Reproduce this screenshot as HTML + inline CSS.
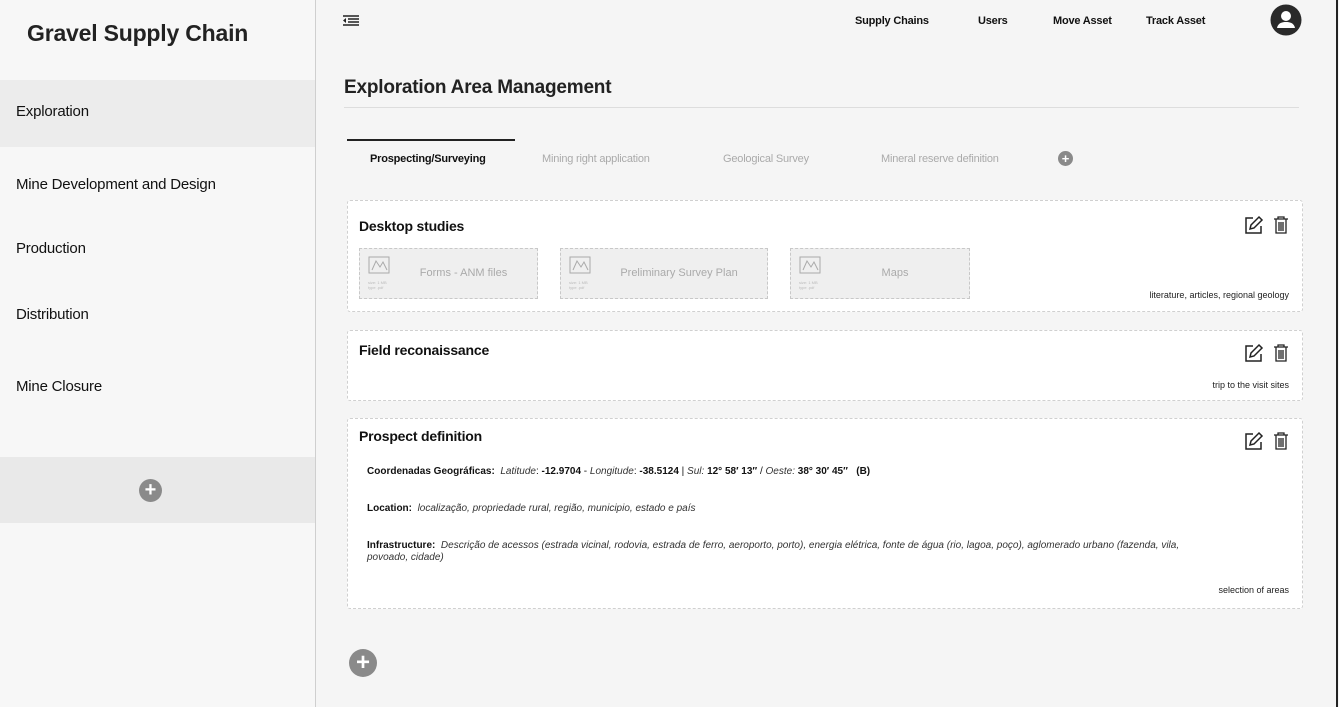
<!DOCTYPE html>
<html><head><meta charset="utf-8"><style>
*{box-sizing:border-box;margin:0;padding:0}
body{width:1339px;height:707px;overflow:hidden;background:#f5f5f5;font-family:"Liberation Sans",sans-serif;color:#111;position:relative}
.side{position:absolute;left:0;top:0;width:316px;height:707px;background:#f7f7f7;border-right:1px solid #cfcfcf}
.side h1{position:absolute;left:27px;top:20px;font-size:23px;font-weight:bold;color:#222;letter-spacing:-0.2px}
.si{position:absolute;left:0;width:315px;font-size:15px;padding-left:16px;color:#111;letter-spacing:-0.2px}
.abs{position:absolute}
.card{position:absolute;left:347px;width:956px;background:#fff;border:1px dashed #d0d0d0;border-radius:3px}
.card h3{position:absolute;left:11px;font-size:14px;font-weight:bold;letter-spacing:-0.2px}
.note{position:absolute;right:13px;font-size:9px;color:#222}
.file{position:absolute;top:47px;height:51px;background:#efefef;border:1px dashed #c8c8c8;color:#aaa;font-size:11px}
.file .lbl{position:absolute;top:18px;right:0;text-align:center}
.file svg{position:absolute;left:8px;top:7px}
.file small{position:absolute;left:8px;top:31px;font-size:4px;line-height:5px;color:#bbb}
.p{position:absolute;left:19px;font-size:10px}
.p i{color:#333}
.plus{position:absolute;border-radius:50%;background:#8a8a8a;color:#fff;text-align:center;font-weight:bold}
.nav{position:absolute;top:15px;font-size:11px;font-weight:bold;letter-spacing:-0.2px}
.tab{position:absolute;top:153px;font-size:11px;color:#aaa;letter-spacing:-0.2px}
</style></head><body>
<div class="side">
<h1>Gravel Supply Chain</h1>
<div class="si" style="top:80px;height:67px;line-height:63px;background:#ececec">Exploration</div>
<div class="si" style="top:176px">Mine Development and Design</div>
<div class="si" style="top:240px">Production</div>
<div class="si" style="top:306px">Distribution</div>
<div class="si" style="top:378px">Mine Closure</div>
<div class="abs" style="left:0;top:457px;width:315px;height:66px;background:#e9e9e9"></div>
<div class="plus" style="left:139px;top:479px;width:23px;height:23px;line-height:23px;font-size:20px">+</div>
</div>
<div class="abs" style="right:1px;top:0;width:2px;height:707px;background:#222"></div>
<svg class="abs" style="left:343px;top:14px" width="16" height="14" viewBox="0 0 16 14"><path d="M0 2h16M5 5h11M5 8h11M0 11h16" stroke="#222" stroke-width="1.6"/><path d="M3 4L0 6.5 3 9z" fill="#222"/></svg>
<div class="nav" style="left:855px">Supply Chains</div>
<div class="nav" style="left:978px">Users</div>
<div class="nav" style="left:1053px">Move Asset</div>
<div class="nav" style="left:1146px">Track Asset</div>
<svg class="abs" style="left:1270px;top:4px" width="32" height="32" viewBox="0 0 32 32"><circle cx="16" cy="16" r="15.5" fill="#2a2a2a"/><circle cx="16" cy="12" r="5" fill="#fff"/><path d="M7 24c1-5 5-6 9-6s8 1 9 6z" fill="#fff"/></svg>
<div class="abs" style="left:344px;top:77px;font-size:19px;font-weight:bold;color:#222;letter-spacing:-0.2px">Exploration Area Management</div>
<div class="abs" style="left:344px;top:107px;width:955px;height:1px;background:#ddd"></div>
<div class="abs" style="left:347px;top:139px;width:168px;height:2px;background:#222"></div>
<div class="tab" style="left:370px;color:#111;font-weight:bold">Prospecting/Surveying</div>
<div class="tab" style="left:542px">Mining right application</div>
<div class="tab" style="left:723px">Geological Survey</div>
<div class="tab" style="left:881px">Mineral reserve definition</div>
<div class="plus" style="left:1058px;top:151px;width:15px;height:15px;line-height:15px;font-size:13px">+</div>

<div class="card" style="top:200px;height:112px">
<h3 style="top:17px">Desktop studies</h3>
<div class="file" style="left:11px;width:179px"><svg width="22" height="20"><rect x="1" y="1" width="20" height="16" fill="none" stroke="#aaa"/><path d="M4 14l4-9 4 6 3-5 4 8M1 17h20" fill="none" stroke="#aaa"/></svg><small>size: 1 MB<br>type .pdf</small><div class="lbl" style="left:30px">Forms - ANM files</div></div>
<div class="file" style="left:212px;width:208px"><svg width="22" height="20"><rect x="1" y="1" width="20" height="16" fill="none" stroke="#aaa"/><path d="M4 14l4-9 4 6 3-5 4 8M1 17h20" fill="none" stroke="#aaa"/></svg><small>size: 1 MB<br>type .pdf</small><div class="lbl" style="left:30px">Preliminary Survey Plan</div></div>
<div class="file" style="left:442px;width:180px"><svg width="22" height="20"><rect x="1" y="1" width="20" height="16" fill="none" stroke="#aaa"/><path d="M4 14l4-9 4 6 3-5 4 8M1 17h20" fill="none" stroke="#aaa"/></svg><small>size: 1 MB<br>type .pdf</small><div class="lbl" style="left:30px">Maps</div></div>
<div class="note" style="top:89px">literature, articles, regional geology</div>
</div>

<div class="card" style="top:330px;height:71px">
<h3 style="top:11px">Field reconaissance</h3>
<div class="note" style="top:49px">trip to the visit sites</div>
</div>

<div class="card" style="top:418px;height:191px">
<h3 style="top:9px">Prospect definition</h3>
<div class="p" style="top:47px"><b>Coordenadas Geográficas:</b>&nbsp; <i>Latitude</i>: <b>-12.9704</b> - <i>Longitude</i>: <b>-38.5124</b> | <i>Sul:</i> <b>12° 58′ 13″</b> / <i>Oeste:</i> <b>38° 30′ 45″</b> &nbsp; <b>(B)</b></div>
<div class="p" style="top:84px"><b>Location:</b>&nbsp; <i>localização, propriedade rural, região, municipio, estado e país</i></div>
<div class="p" style="top:121px;width:845px;line-height:12px"><b>Infrastructure:</b>&nbsp; <i>Descrição de acessos (estrada vicinal, rodovia, estrada de ferro, aeroporto, porto), energia elétrica, fonte de água (rio, lagoa, poço), aglomerado urbano (fazenda, vila, povoado, cidade)</i></div>
<div class="note" style="top:166px">selection of areas</div>
</div>

<svg class="abs" style="left:1244px;top:215px" width="20" height="20" viewBox="0 0 20 20"><path d="M9 3H2v15h15v-7" fill="none" stroke="#222" stroke-width="1.5"/><path d="M15 2l3 3-8 8-4 1 1-4z" fill="none" stroke="#222" stroke-width="1.5"/></svg>
<svg class="abs" style="left:1273px;top:215px" width="16" height="20" viewBox="0 0 16 20"><path d="M1 4h14M5 4V2h6v2M3 4v14h10V4M6 7v9M8 7v9M10 7v9" fill="none" stroke="#222" stroke-width="1.3"/></svg>
<svg class="abs" style="left:1244px;top:343px" width="20" height="20" viewBox="0 0 20 20"><path d="M9 3H2v15h15v-7" fill="none" stroke="#222" stroke-width="1.5"/><path d="M15 2l3 3-8 8-4 1 1-4z" fill="none" stroke="#222" stroke-width="1.5"/></svg>
<svg class="abs" style="left:1273px;top:343px" width="16" height="20" viewBox="0 0 16 20"><path d="M1 4h14M5 4V2h6v2M3 4v14h10V4M6 7v9M8 7v9M10 7v9" fill="none" stroke="#222" stroke-width="1.3"/></svg>
<svg class="abs" style="left:1244px;top:431px" width="20" height="20" viewBox="0 0 20 20"><path d="M9 3H2v15h15v-7" fill="none" stroke="#222" stroke-width="1.5"/><path d="M15 2l3 3-8 8-4 1 1-4z" fill="none" stroke="#222" stroke-width="1.5"/></svg>
<svg class="abs" style="left:1273px;top:431px" width="16" height="20" viewBox="0 0 16 20"><path d="M1 4h14M5 4V2h6v2M3 4v14h10V4M6 7v9M8 7v9M10 7v9" fill="none" stroke="#222" stroke-width="1.3"/></svg>

<div class="plus" style="left:349px;top:649px;width:28px;height:28px;line-height:28px;font-size:24px">+</div>
</body></html>
